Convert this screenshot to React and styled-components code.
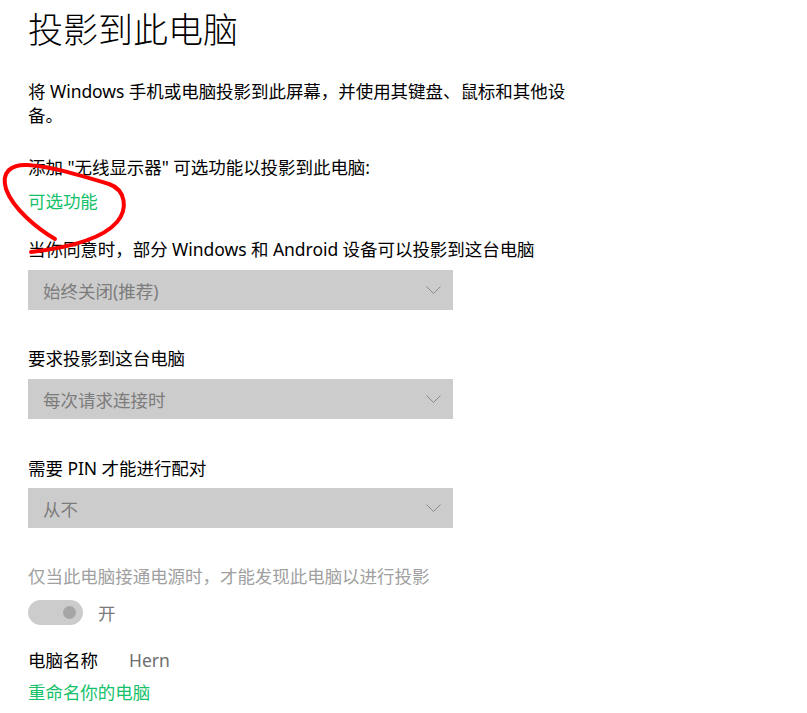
import React from "react";
import styled, { createGlobalStyle } from "styled-components";

const Global = createGlobalStyle`
  html, body { margin: 0; padding: 0; background: #fff; }
  body {
    font-family: "Noto Sans", "Noto Sans CJK SC", sans-serif;
    -webkit-font-smoothing: antialiased;
  }
`;

const Page = styled.div`
  position: relative;
  width: 807px;
  height: 713px;
  overflow: hidden;
  box-sizing: border-box;
  padding: 7px 0 0 28px;
  display: flex;
  flex-direction: column;
  align-items: flex-start;
`;

const Title = styled.h1`
  margin: 0;
  font-size: 35px;
  line-height: 46px;
  font-weight: 300;
  color: #000;
`;

const Text = styled.div`
  margin-top: ${(p) => p.$gap || 0}px;
  font-size: 17.5px;
  line-height: 24px;
  letter-spacing: -0.05px;
  color: ${(p) => p.$color || "#000"};
  max-width: ${(p) => (p.$wrap ? `${p.$wrap}px` : "none")};
`;

const Link = styled(Text)`
  color: #16c16a;
  cursor: pointer;
`;

const Select = styled.div`
  margin-top: ${(p) => p.$gap || 9}px;
  width: 425px;
  height: 40px;
  box-sizing: border-box;
  background: #cccccc;
  display: flex;
  align-items: center;
  justify-content: space-between;
  padding: 0 12px 0 15px;
  font-size: 17.5px;
  color: #7c7c7c;
`;

const ToggleRow = styled.div`
  margin-top: 12px;
  display: flex;
  align-items: center;
  gap: 15px;
`;

const Track = styled.div`
  width: 55px;
  height: 25px;
  border-radius: 13px;
  background: #cccccc;
  display: flex;
  align-items: center;
  justify-content: flex-end;
  padding-right: 7px;
  box-sizing: border-box;
`;

const Knob = styled.div`
  width: 13px;
  height: 13px;
  border-radius: 50%;
  background: #a6a6a6;
`;

const ToggleLabel = styled.span`
  font-size: 17.5px;
  line-height: 24px;
  color: #7a7a7a;
`;

const NameRow = styled.div`
  margin-top: 23px;
  display: flex;
  align-items: center;
  gap: 31px;
  font-size: 17.5px;
  line-height: 24px;
`;

const NameValue = styled.span`
  color: #6e6e6e;
`;

const Annotation = styled.svg`
  position: absolute;
  left: 0;
  top: 0;
  pointer-events: none;
`;

const Chevron = () => (
  <svg width="15" height="8" viewBox="0 0 15 8">
    <path d="M0.5 0.5 L7.5 7.5 L14.5 0.5" fill="none" stroke="#8a8a8a" strokeWidth="1" />
  </svg>
);

export default function App() {
  return (
    <>
      <Global />
      <Page>
        <Title>投影到此电脑</Title>
        <Text $gap={26} $wrap={548}>
          将 Windows 手机或电脑投影到此屏幕，并使用其键盘、鼠标和其他设备。
        </Text>
        <Text $gap={28}>添加 "无线显示器" 可选功能以投影到此电脑:</Text>
        <Link $gap={10}>可选功能</Link>
        <Text $gap={24}>当你同意时，部分 Windows 和 Android 设备可以投影到这台电脑</Text>
        <Select>
          <span>始终关闭(推荐)</span>
          <Chevron />
        </Select>
        <Text $gap={36}>要求投影到这台电脑</Text>
        <Select>
          <span>每次请求连接时</span>
          <Chevron />
        </Select>
        <Text $gap={37}>需要 PIN 才能进行配对</Text>
        <Select $gap={8}>
          <span>从不</span>
          <Chevron />
        </Select>
        <Text $gap={36} $color="#a0a0a0">仅当此电脑接通电源时，才能发现此电脑以进行投影</Text>
        <ToggleRow>
          <Track>
            <Knob />
          </Track>
          <ToggleLabel>开</ToggleLabel>
        </ToggleRow>
        <NameRow>
          <span>电脑名称</span>
          <NameValue>Hern</NameValue>
        </NameRow>
        <Link $gap={8}>重命名你的电脑</Link>
        <Annotation width="807" height="713" viewBox="0 0 807 713">
          <path
            d="M55 239 C 38 229 13 209 6 189 C 1 172 11 164 28 165 C 55 167 86 177 109 184 C 126 190 128 209 117 222 C 104 237 75 247 31 252"
            fill="none"
            stroke="#ff0000"
            strokeWidth="4"
            strokeLinecap="round"
            strokeLinejoin="round"
          />
        </Annotation>
      </Page>
    </>
  );
}
